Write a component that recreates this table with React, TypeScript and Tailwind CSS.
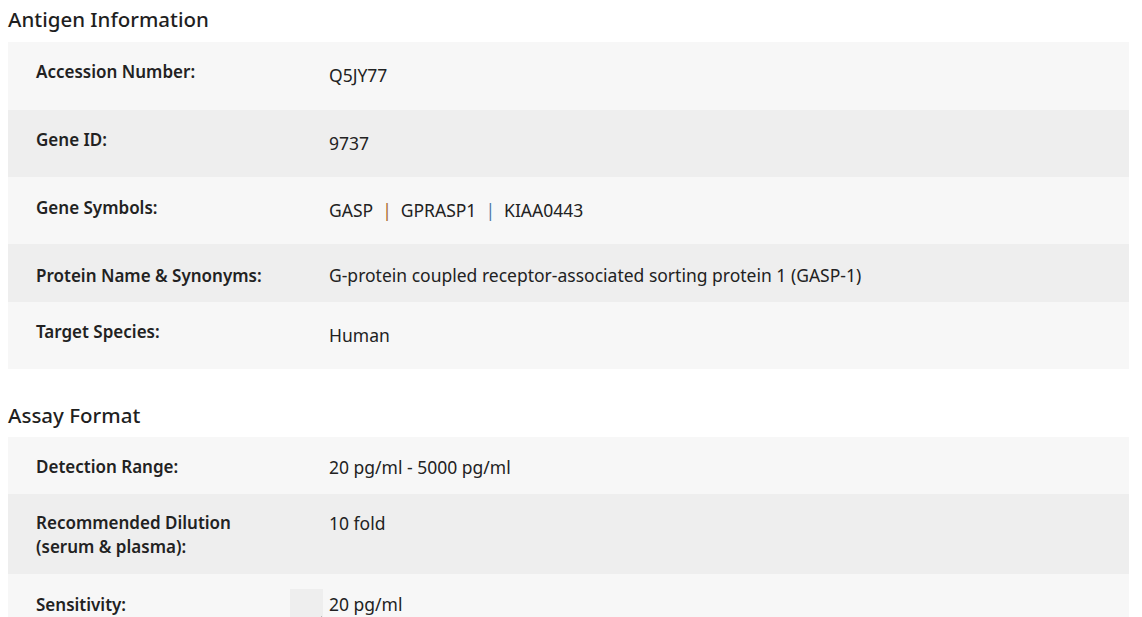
import React from "react";

interface Row {
  label: React.ReactNode;
  value: React.ReactNode;
  rowClass: string;
  labelClass: string;
  valueClass: string;
}

const antigenRows: Row[] = [
  {
    label: "Accession Number:",
    value: "Q5JY77",
    rowClass: "h-[68px] bg-[#f7f7f7]",
    labelClass: "pt-[18px]",
    valueClass: "pt-[21px]",
  },
  {
    label: "Gene ID:",
    value: "9737",
    rowClass: "h-[67px] bg-[#eeeeee]",
    labelClass: "pt-[18px]",
    valueClass: "pt-[21px]",
  },
  {
    label: "Gene Symbols:",
    value: (
      <>
        GASP
        <span className="mx-[9px] text-[#a8692e]">|</span>
        GPRASP1
        <span className="mx-[9px] text-[#4f7aa8]">|</span>
        KIAA0443
      </>
    ),
    rowClass: "h-[67px] bg-[#f7f7f7]",
    labelClass: "pt-[19px]",
    valueClass: "pt-[21px]",
  },
  {
    label: "Protein Name & Synonyms:",
    value: "G-protein coupled receptor-associated sorting protein 1 (GASP-1)",
    rowClass: "h-[58px] bg-[#eeeeee]",
    labelClass: "pt-[20px]",
    valueClass: "pt-[19px]",
  },
  {
    label: "Target Species:",
    value: "Human",
    rowClass: "h-[67px] bg-[#f7f7f7]",
    labelClass: "pt-[18px]",
    valueClass: "pt-[21px]",
  },
];

const assayRows: Row[] = [
  {
    label: "Detection Range:",
    value: "20 pg/ml - 5000 pg/ml",
    rowClass: "h-[57px] bg-[#f7f7f7]",
    labelClass: "pt-[18px]",
    valueClass: "pt-[18px]",
  },
  {
    label: (
      <>
        Recommended Dilution
        <br />
        (serum &amp; plasma):
      </>
    ),
    value: "10 fold",
    rowClass: "h-[80px] bg-[#eeeeee]",
    labelClass: "pt-[17px]",
    valueClass: "pt-[17px]",
  },
];

function InfoTable({ rows, children }: { rows: Row[]; children?: React.ReactNode }) {
  return (
    <div className="mx-[8px] w-[1121px]">
      {rows.map((r, i) => (
        <div key={i} className={`grid grid-cols-[321px_1fr] ${r.rowClass}`}>
          <div className={`pl-[28px] text-[17px] font-semibold leading-[24px] ${r.labelClass}`}>{r.label}</div>
          <div className={`text-[17.5px] leading-[24px] ${r.valueClass}`}>{r.value}</div>
        </div>
      ))}
      {children}
    </div>
  );
}

export default function App() {
  return (
    <div
      className="w-[1142px] h-[617px] overflow-hidden bg-white text-[16px] text-[#222222]"
      style={{ fontFamily: '"Noto Sans", "Open Sans", sans-serif' }}
    >
      <h2 className="pl-[8px] pt-[5px] h-[42px] text-[20.5px] font-medium leading-[28px] text-[#1f1f1f]">
        Antigen Information
      </h2>
      <InfoTable rows={antigenRows} />

      <h2 className="pl-[8px] pt-[32px] h-[68px] text-[20.5px] font-medium leading-[28px] text-[#1f1f1f]">
        Assay Format
      </h2>
      <InfoTable rows={assayRows}>
        <div className="grid grid-cols-[282px_1fr] h-[57px] bg-[#f7f7f7]">
          <div className="pl-[28px] pt-[19px] text-[17px] font-semibold leading-[24px]">Sensitivity:</div>
          <div className="flex pt-[15px]">
            <div className="relative w-[33px] h-[28px] bg-[#eeeeee]">
              <span className="absolute right-[1px] bottom-[-5px] w-0 h-0 border-l-[3px] border-l-transparent border-b-[6px] border-b-[#222]" />
            </div>
            <span className="pl-[6px] pt-[3px] text-[17.5px] leading-[24px]">20 pg/ml</span>
          </div>
        </div>
      </InfoTable>
    </div>
  );
}
